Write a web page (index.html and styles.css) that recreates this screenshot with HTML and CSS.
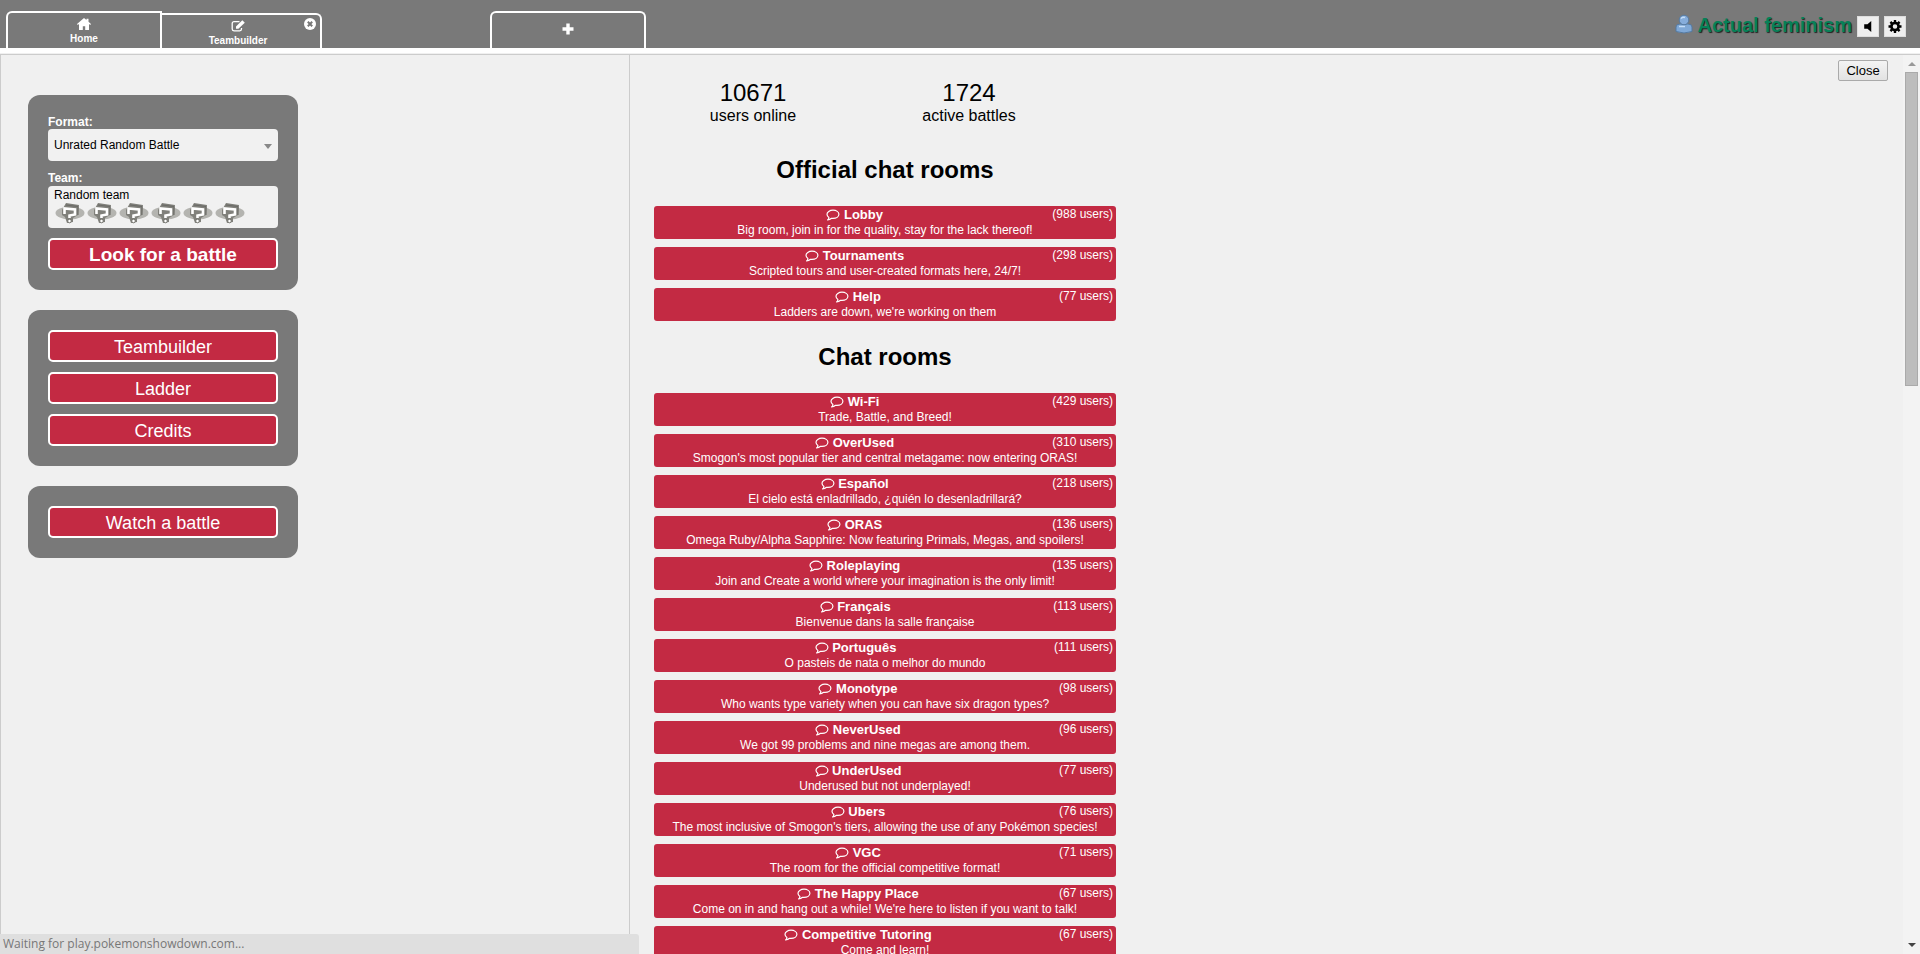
FILE: index.html
```
<!DOCTYPE html>
<html lang="en">
<head>
<meta charset="utf-8">
<title>Showdown!</title>
<link rel="stylesheet" href="styles.css">
</head>
<body>
<svg class="defs" aria-hidden="true">
  <symbol id="comment" viewBox="0 0 14 12"><path d="M7 1.2C10.3 1.2 12.9 3 12.9 5.3S10.3 9.4 7 9.4L5.6 9.3C4.6 10.2 3.3 10.9 1.6 11 2.4 10.3 2.8 9.5 2.9 8.5 1.7 7.7 1 6.6 1 5.3 1 3 3.700 1.200 7 1.200Z" fill="none" stroke="currentColor" stroke-width="1.200" stroke-linejoin="round"/></symbol>
  <symbol id="unknown" viewBox="0 0 30 22"><ellipse cx="15" cy="11" rx="14.500" ry="6.500" fill="#b4b4b0"/><path d="M7 8 11 1 24 3 23 13 18 16V20L12 21 10 15 7 13Z" fill="#80807b"/><path d="M9.500 12V6.500L20 7.500V12.500L14.500 13.500V16" fill="none" stroke="#fff" stroke-width="2.600"/><path d="M11 3 23 4.500V13" fill="none" stroke="#6a6a66"/><circle cx="14.500" cy="19" r="1.800" fill="#fff" stroke="#74746f"/></symbol>
</svg>
<header class="header">
  <nav class="tabs">
    <a class="tab tab-current" href="#home"><svg class="tab-icon" viewBox="0 0 14 12"><path d="M7 0 9.500 2.100V.8H11.500V3.800L14 6 13.200 7 12 6V12H8.200V8.300H5.800V12H2V6L.8 7 0 6Z" fill="currentColor"/></svg>Home</a>
    <div class="tab-wrap">
      <a class="tab tab-builder" href="#teambuilder"><svg class="tab-icon" viewBox="0 0 14 12"><path d="M8.500 1.700H3A1.800 1.800 0 0 0 1.200 3.500V9A1.800 1.800 0 0 0 3 10.800H8.700A1.800 1.800 0 0 0 10.500 9V8" fill="none" stroke="currentColor" stroke-width="1.300"/><path d="M5 8.800V6.400L11.300.2 13.800 2.700 7.400 8.800Z" fill="currentColor"/></svg>Teambuilder</a>
      <button class="tab-close" aria-label="Close Teambuilder"><svg viewBox="0 0 12 12"><circle cx="6" cy="6" r="6" fill="#fff"/><path d="M3.800 3.800 8.200 8.200M8.200 3.800 3.800 8.200" stroke="#777" stroke-width="2"/></svg></button>
    </div>
    <a class="tab tab-add" href="#rooms" aria-label="Join a chat room"><svg class="plus" viewBox="0 0 12 12"><path d="M4.300 0.500H7.700V4.300H11.500V7.700H7.700V11.500H4.300V7.700H.5V4.300H4.300Z" fill="currentColor"/></svg></a>
  </nav>
  <div class="userbar">
    <svg class="avatar" viewBox="0 0 18 20"><path d="M1 17.500V13Q1 10 5 10H13Q17 10 17 13V17.500Q9 20.500 1 17.500Z" fill="#7fa8d6" stroke="#55799f"/><circle cx="9" cy="6" r="4.800" fill="#86addb" stroke="#55799f"/><path d="M6 4.500Q7.500 2.500 10 3.500M4 12.500H10" fill="none" stroke="#c5def8" stroke-width="1.500"/></svg>
    <a class="username" href="#user">Actual feminism</a>
    <button class="tool" aria-label="Sound"><svg viewBox="0 0 12 12"><path d="M9 1V11L5.500 8H2.500V4H5.500Z" fill="#000"/></svg></button>
    <button class="tool" aria-label="Options"><svg viewBox="0 0 12 12"><circle cx="6" cy="6" r="3.300" fill="none" stroke="#000" stroke-width="2.400"/><path d="M6 0V2.500M6 9.500V12M0 6H2.500M9.500 6H12M1.800 1.800 3.500 3.500M8.500 8.500 10.200 10.200M10.200 1.800 8.500 3.500M3.500 8.500 1.800 10.200" stroke="#000" stroke-width="2.200"/></svg></button>
  </div>
</header>
<div class="page">
  <main class="home">
    <form class="menu">
      <label class="label" for="format">Format:</label>
      <div class="select"><select id="format"><option>Unrated Random Battle</option></select></div>
      <label class="label label-team" for="team">Team:</label>
      <button class="team" id="team" type="button">Random team
        <span class="sprites"><svg><use href="#unknown"/></svg><svg><use href="#unknown"/></svg><svg><use href="#unknown"/></svg><svg><use href="#unknown"/></svg><svg><use href="#unknown"/></svg><svg><use href="#unknown"/></svg></span>
      </button>
      <button class="big big-primary" type="button">Look for a battle</button>
    </form>
    <div class="menu">
      <button class="big">Teambuilder</button>
      <button class="big">Ladder</button>
      <button class="big">Credits</button>
    </div>
    <div class="menu">
      <button class="big">Watch a battle</button>
    </div>
  </main>
  <section class="rooms">
    <div class="rooms-body">
      <div class="stats">
        <div class="stat"><span class="num">10671</span>users online</div>
        <div class="stat"><span class="num">1724</span>active battles</div>
      </div>
      <h2>Official chat rooms</h2>
      <div class="list">
        <a class="room" href="#lobby"><span class="top"><strong><svg><use href="#comment"/></svg> Lobby</strong><span>(988 users)</span></span><span>Big room, join in for the quality, stay for the lack thereof!</span></a>
        <a class="room" href="#tournaments"><span class="top"><strong><svg><use href="#comment"/></svg> Tournaments</strong><span>(298 users)</span></span><span>Scripted tours and user-created formats here, 24/7!</span></a>
        <a class="room" href="#help"><span class="top"><strong><svg><use href="#comment"/></svg> Help</strong><span>(77 users)</span></span><span>Ladders are down, we're working on them</span></a>
      </div>
      <h2>Chat rooms</h2>
      <div class="list">
        <a class="room" href="#wifi"><span class="top"><strong><svg><use href="#comment"/></svg> Wi-Fi</strong><span>(429 users)</span></span><span>Trade, Battle, and Breed!</span></a>
        <a class="room" href="#overused"><span class="top"><strong><svg><use href="#comment"/></svg> OverUsed</strong><span>(310 users)</span></span><span>Smogon's most popular tier and central metagame: now entering ORAS!</span></a>
        <a class="room" href="#espanol"><span class="top"><strong><svg><use href="#comment"/></svg> Español</strong><span>(218 users)</span></span><span>El cielo está enladrillado, ¿quién lo desenladrillará?</span></a>
        <a class="room" href="#oras"><span class="top"><strong><svg><use href="#comment"/></svg> ORAS</strong><span>(136 users)</span></span><span>Omega Ruby/Alpha Sapphire: Now featuring Primals, Megas, and spoilers!</span></a>
        <a class="room" href="#roleplaying"><span class="top"><strong><svg><use href="#comment"/></svg> Roleplaying</strong><span>(135 users)</span></span><span>Join and Create a world where your imagination is the only limit!</span></a>
        <a class="room" href="#francais"><span class="top"><strong><svg><use href="#comment"/></svg> Français</strong><span>(113 users)</span></span><span>Bienvenue dans la salle française</span></a>
        <a class="room" href="#portugues"><span class="top"><strong><svg><use href="#comment"/></svg> Português</strong><span>(111 users)</span></span><span>O pasteis de nata o melhor do mundo</span></a>
        <a class="room" href="#monotype"><span class="top"><strong><svg><use href="#comment"/></svg> Monotype</strong><span>(98 users)</span></span><span>Who wants type variety when you can have six dragon types?</span></a>
        <a class="room" href="#neverused"><span class="top"><strong><svg><use href="#comment"/></svg> NeverUsed</strong><span>(96 users)</span></span><span>We got 99 problems and nine megas are among them.</span></a>
        <a class="room" href="#underused"><span class="top"><strong><svg><use href="#comment"/></svg> UnderUsed</strong><span>(77 users)</span></span><span>Underused but not underplayed!</span></a>
        <a class="room" href="#ubers"><span class="top"><strong><svg><use href="#comment"/></svg> Ubers</strong><span>(76 users)</span></span><span>The most inclusive of Smogon's tiers, allowing the use of any Pokémon species!</span></a>
        <a class="room" href="#vgc"><span class="top"><strong><svg><use href="#comment"/></svg> VGC</strong><span>(71 users)</span></span><span>The room for the official competitive format!</span></a>
        <a class="room" href="#happyplace"><span class="top"><strong><svg><use href="#comment"/></svg> The Happy Place</strong><span>(67 users)</span></span><span>Come on in and hang out a while! We're here to listen if you want to talk!</span></a>
        <a class="room" href="#tutoring"><span class="top"><strong><svg><use href="#comment"/></svg> Competitive Tutoring</strong><span>(67 users)</span></span><span>Come and learn!</span></a>
      </div>
    </div>
    <button class="close">Close</button>
    <div class="scrollbar" aria-hidden="true"><span class="up"></span><span class="thumb"></span><span class="down"></span></div>
  </section>
</div>
<div class="status">Waiting for play.pokemonshowdown.com...</div>
</body>
</html>
```
FILE: styles.css
```
* { box-sizing: border-box; }
body {
  margin: 0;
  height: 100vh;
  overflow: hidden;
  display: flex;
  flex-direction: column;
  position: relative;
  background: #f0f0f0;
  color: #000;
  font-family: "Liberation Sans", Arial, sans-serif;
  font-size: 12px;
}
a { color: inherit; text-decoration: none; }
button, select { font: inherit; margin: 0; }
.defs { position: absolute; width: 0; height: 0; }

.header {
  display: flex;
  justify-content: space-between;
  align-items: flex-start;
  height: 53px;
  flex: none;
  background: #797979;
  border-bottom: 5px solid #fff;
}
.tabs { display: flex; align-items: flex-end; height: 48px; padding-left: 6px; }
.tab {
  display: flex;
  flex-direction: column;
  align-items: center;
  gap: 2px;
  width: 156px;
  height: 37px;
  padding-top: 5px;
  border: 2px solid #fff;
  border-bottom: 0;
  color: #fff;
  font-size: 10px;
  font-weight: bold;
  line-height: 14px;
}
.tab-current { border-top-left-radius: 6px; }
.tab-wrap { position: relative; }
.tab-builder {
  width: 160px;
  height: 35px;
  padding-right: 6px;
  border-left: 0;
  border-top-right-radius: 6px;
}
.tab-add { margin-left: 168px; border-radius: 6px 6px 0 0; padding-top: 10px; }
.tab-icon { width: 14px; height: 12px; }
.plus { width: 12px; height: 12px; }
.tab-close {
  position: absolute;
  top: 5px;
  right: 6px;
  width: 12px;
  height: 12px;
  padding: 0;
  border: 0;
  background: none;
}
.tab-close svg { display: block; }

.userbar { display: flex; align-items: flex-start; gap: 5px; padding: 14px 14px 0 0; }
.avatar { width: 18px; height: 20px; }
.username {
  color: #078058;
  font-size: 20px;
  font-weight: bold;
  line-height: 22px;
  text-shadow: 1px 1px 1px #222;
}
.tool {
  width: 22px;
  height: 21px;
  margin-top: 2px;
  padding: 3px;
  border: 1px solid #ddd;
  background: #eee;
}
.tool svg { display: block; width: 100%; height: 100%; }

.page { display: flex; flex: 1; min-height: 0; margin-top: 1px; border-top: 1px solid #ccc; }
.home {
  flex: none;
  width: 630px;
  max-width: 50%;
  padding: 40px 27px;
  border: solid #ccc;
  border-width: 0 1px;
  display: flex;
  flex-direction: column;
  gap: 20px;
}
.menu {
  width: 270px;
  padding: 20px;
  border-radius: 12px;
  background: #797979;
  display: flex;
  flex-direction: column;
  gap: 10px;
}
form.menu { gap: 0; }
.label { color: #fff; font-weight: bold; line-height: 14px; }
.label-team { margin-top: 10px; }
.select { position: relative; }
.select select {
  display: block;
  appearance: none;
  width: 100%;
  height: 32px;
  padding: 0 6px;
  border: 0;
  border-radius: 4px;
  background: #f1f1f1;
  color: #000;
}
.select::after {
  content: "";
  position: absolute;
  right: 6px;
  top: 15px;
  border: 4px solid transparent;
  border-top: 5px solid #888;
  border-bottom: 0;
}
.team {
  display: flex;
  flex-direction: column;
  width: 100%;
  height: 42px;
  margin-top: 1px;
  padding: 2px 6px;
  border: 0;
  border-radius: 4px;
  background: #f1f1f1;
  color: #000;
  line-height: 14px;
  text-align: left;
}
.sprites { display: flex; gap: 2px; padding-left: 1px; }
.sprites svg { width: 30px; height: 22px; }
.big {
  width: 100%;
  height: 32px;
  padding: 2px 0 0;
  border: 2px solid #fff;
  border-radius: 5px;
  background: #c32a43;
  color: #fff;
  font-size: 18px;
}
.big-primary { margin-top: 10px; font-size: 19px; font-weight: bold; }

.rooms { position: relative; flex: 1; min-width: 0; overflow: hidden; padding: 24px 24px 0; }
.rooms-body { max-width: 462px; }
.stats { display: flex; gap: 18px; }
.stat { width: 198px; text-align: center; font-size: 16px; line-height: 18px; }
.num { display: block; font-size: 24px; line-height: 28px; }
h2 { margin: 31px 0 22px; text-align: center; font-size: 24px; line-height: 28px; }
.list + h2 { margin-top: 22px; }
.list { display: flex; flex-direction: column; gap: 8px; }
.room {
  display: block;
  height: 33px;
  padding: 1px 3px;
  border-radius: 3px;
  background: #c32a43;
  color: #fff;
  line-height: 15px;
  text-align: center;
}
.room > span { display: block; }
.room .top { display: flex; }
.top strong { flex: 1; font-size: 13px; line-height: 16px; }
.top svg { width: 14px; height: 12px; vertical-align: -2px; }
.close {
  position: absolute;
  top: 5px;
  right: 32px;
  width: 50px;
  height: 21px;
  padding: 0;
  border: 1px solid #aaa;
  border-radius: 2px;
  background: linear-gradient(#f4f4f4, #e2e2e2);
  color: #000;
  font-size: 13px;
}
.scrollbar {
  position: absolute;
  top: 0;
  right: 0;
  bottom: 0;
  width: 17px;
  padding: 7px 2px;
  display: flex;
  flex-direction: column;
  align-items: center;
  background: #f3f3f3;
}
.up, .down { border: 4px solid transparent; }
.up { border-top: 0; border-bottom: 4px solid #999; }
.down { margin-top: auto; border-bottom: 0; border-top: 4px solid #444; }
.thumb { width: 13px; height: 314px; margin-top: 6px; background: #bdbdbd; border: 1px solid #aaa; }

.status {
  position: absolute;
  left: 0;
  bottom: 0;
  width: 639px;
  max-width: 100%;
  height: 20px;
  padding: 0 3px;
  border-top-right-radius: 3px;
  background: #dfdfdf;
  color: #777;
  font-family: "Open Sans", sans-serif;
  line-height: 20px;
}
```
